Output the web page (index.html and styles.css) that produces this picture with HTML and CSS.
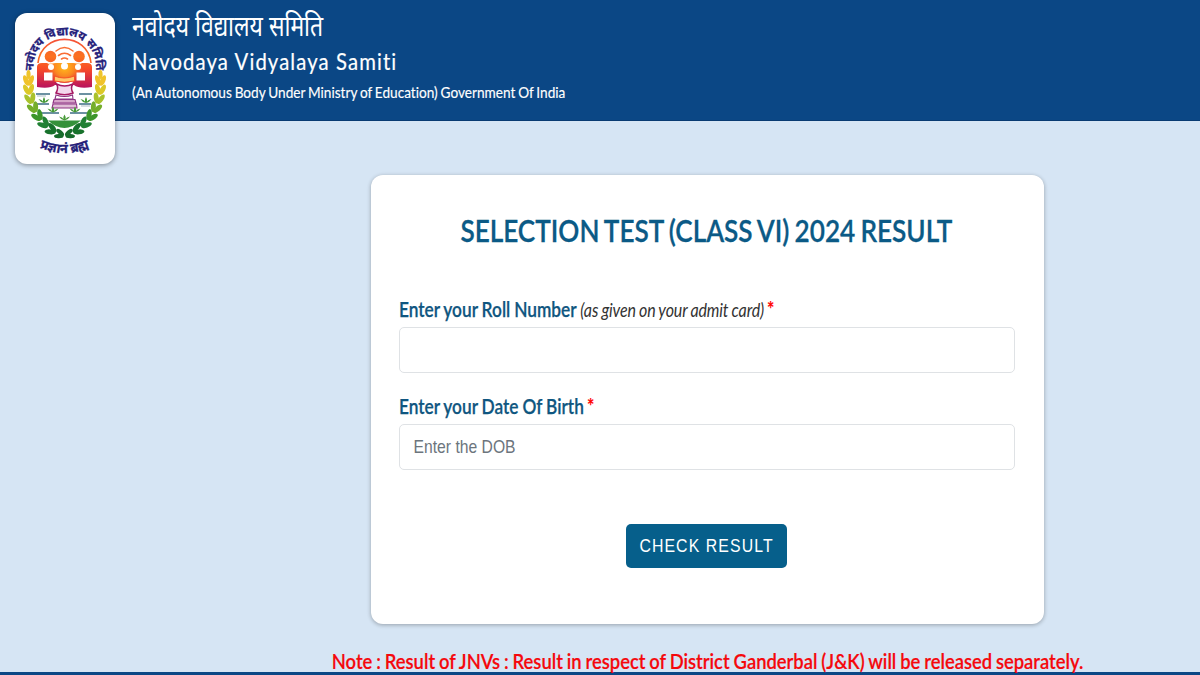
FILE: index.html
```html
<!DOCTYPE html>
<html lang="en">
<head>
<meta charset="utf-8">
<title>Navodaya Vidyalaya Samiti</title>
<link rel="stylesheet" href="styles.css">
</head>
<body>
<header class="header">
  <div class="logo">
    <svg viewBox="15 12 100 151" width="100" height="151" aria-label="Navodaya Vidyalaya Samiti emblem">
      <defs>
        <linearGradient id="people" gradientUnits="userSpaceOnUse" x1="0" y1="38" x2="0" y2="88">
          <stop offset="0" stop-color="#f4503a"/><stop offset=".35" stop-color="#fb7220"/><stop offset=".6" stop-color="#f84b28"/><stop offset="1" stop-color="#b40f62"/>
        </linearGradient>
        <radialGradient id="glow" gradientUnits="userSpaceOnUse" cx="64.5" cy="66" r="19">
          <stop offset="0" stop-color="#ffc01c"/><stop offset=".5" stop-color="#ff9b1d" stop-opacity=".8"/><stop offset="1" stop-color="#ff7a1d" stop-opacity="0"/>
        </radialGradient>
        <g id="leaf">
          <ellipse cx="-2.400" cy="-2.500" rx="2.500" ry="5.600" transform="rotate(-22 -2.400 -2.500)"/>
          <ellipse cx="2.400" cy="-2.500" rx="2.500" ry="5.600" transform="rotate(22 2.400 -2.500)"/>
        </g>
        <g id="wreath">
          <ellipse cx="28.500" cy="73.500" rx="2.100" ry="4.500" fill="#eec42c"/>
          <use href="#leaf" transform="translate(28.500 82)" fill="#f0c22a"/>
          <use href="#leaf" transform="translate(29 91) rotate(-5)" fill="#dcc827"/>
          <use href="#leaf" transform="translate(31 100) rotate(-14)" fill="#a9c22c"/>
          <use href="#leaf" transform="translate(34.500 109) rotate(-25)" fill="#74ae2b"/>
          <use href="#leaf" transform="translate(39.500 117) rotate(-36)" fill="#3d962b"/>
          <use href="#leaf" transform="translate(46 124) rotate(-49)" fill="#208034"/>
          <use href="#leaf" transform="translate(53.500 130) rotate(-61)" fill="#18722c"/>
          <use href="#leaf" transform="translate(61.500 134) rotate(-70) scale(.85)" fill="#176b2b"/>
        </g>
        <g id="plant"><path d="M0 0Q-4-1-5.500-4Q-2-3.500-1-1.500Q-1.500-4 0-6Q1.500-4 1-1.500Q2-3.500 5.500-4Q4-1 0 0Z" fill="#489a39"/></g>
        <path id="arcTop" d="M33 70L33.500 65C36 24 93 24 96 65L96.500 70"/>
        <path id="arcBottom" d="M39 146.500Q64.500 157.500 90 146.500"/>
      </defs>
      <text class="emblem-text emblem-top"><textPath href="#arcTop" startOffset="50%">नवोदय विद्यालय समिति</textPath></text>
      <path d="M38 62C41 30.500 88 30.500 91 62" fill="none" stroke="url(#people)" stroke-width="1.600"/>
      <g fill="none" stroke="#f96d35" stroke-width="1.600" stroke-linecap="round">
        <path d="M56 50Q64.500 43 73 50"/><path d="M58.500 54.500Q64.500 50 70.500 54.500"/><path d="M61.500 58Q64.500 56 67.500 58"/>
      </g>
      <g fill="url(#people)">
        <circle cx="50.500" cy="55.500" r="5.800"/><circle cx="79" cy="55.500" r="5.800"/>
        <path d="M37 86V66Q37 62 42 62H47L50 64L56 62H73L79 64L82 62H87Q92 62 92 66V86Q79 88 74 84H55Q50 88 37 86Z"/>
      </g>
      <rect x="43" y="62" width="43" height="19" fill="url(#glow)"/>
      <g fill="#fff">
        <circle cx="51" cy="66" r="3"/><circle cx="64.500" cy="65" r="3.500"/><circle cx="78" cy="66" r="3"/>
        <path d="M44 71.500H52.500V79.500H44ZM76.500 71.500H85V79.500H76.500Z"/>
        <path d="M56 80Q64.500 84 73 80L71 88H58Z"/>
      </g>
      <path d="M54.500 75Q64 79 74.500 75V80Q64.500 82.500 54.500 80Z" fill="#ffc76a" stroke="#f75223" stroke-width="1"/>
      <path d="M56 92Q59 87 56.500 83Q64.500 87 73 83Q70 87 73 92Q64.500 95.500 56 92Z" fill="#f3d7ec" stroke="#a71861" stroke-width="1.500"/>
      <g stroke="#8e3383" stroke-width="1.100">
        <path d="M56 94Q64.500 97 72.500 94L73 98H55Z" fill="#fff"/>
        <path d="M54 98.500H75L76 102H53Z" fill="#d6a5c9"/>
        <path d="M53 103H76.500L77 107H52Z" fill="#e0bfd7"/>
      </g>
      <path d="M36 93H50M79 93H92M37 103H49M79 103H91M41 112H59M70 112H87" stroke="#3d6e84" stroke-width="1.300"/>
      <path d="M37 95H46M81 105H90" stroke="#8a9dac" stroke-width=".7"/>
      <use href="#plant" x="44" y="102"/><use href="#plant" x="86" y="102"/><use href="#plant" x="53" y="111.500"/><use href="#plant" x="75" y="111.500"/>
      <use href="#wreath"/><use href="#wreath" transform="translate(129 0) scale(-1 1)"/>
      <path d="M48 119.500H81Q72 127 64.500 127Q56 127 48 119.500Z" fill="#35913a"/>
      <use href="#plant" x="64.500" y="119.500"/>
      <text class="emblem-text emblem-bottom"><textPath href="#arcBottom" startOffset="50%">प्रज्ञानं ब्रह्म</textPath></text>
    </svg>
  </div>
  <div class="brand">
    <div class="brand-hindi squeeze">नवोदय विद्यालय समिति</div>
    <div class="brand-english squeeze">Navodaya Vidyalaya Samiti</div>
    <div class="brand-sub squeeze">(An Autonomous Body Under Ministry of Education) Government Of India</div>
  </div>
</header>
<main class="main">
  <form class="card">
    <h1 class="title">SELECTION TEST (CLASS VI) 2024 RESULT</h1>
    <label class="label squeeze" for="roll">Enter your Roll Number <em class="hint">(as given on your admit card)</em> <span class="required">*</span></label>
    <div class="field"><input class="input squeeze" id="roll" type="text"></div>
    <label class="label squeeze" for="dob">Enter your Date Of Birth <span class="required">*</span></label>
    <div class="field"><input class="input squeeze" id="dob" type="text" placeholder="Enter the DOB"></div>
    <button class="button" type="button"><span class="button-text">CHECK RESULT</span></button>
  </form>
  <p class="note">Note : Result of JNVs : Result in respect of District Ganderbal (J&amp;K) will be released separately.</p>
</main>
<footer class="footer"></footer>
</body>
</html>
```
FILE: styles.css
```css
* { box-sizing: border-box; }
body {
  margin: 0;
  height: 675px;
  overflow: hidden;
  display: flex;
  flex-direction: column;
  background: #d6e5f4;
  font-family: Lato, "Noto Sans", sans-serif;
  font-variant-ligatures: no-common-ligatures;
}
.header {
  flex: none;
  display: flex;
  height: 120.500px;
  padding: 12.500px 0 0 15px;
  background: #0b4785;
  border-bottom: 1px solid #083b72;
}
.logo {
  position: relative;
  z-index: 1;
  flex: none;
  width: 100px;
  height: 151px;
  overflow: hidden;
  background: #fff;
  border-radius: 12px;
  box-shadow: 0 1px 5px rgba(0, 0, 0, .4);
}
.logo svg { display: block; }
.emblem-text {
  font-family: "Noto Sans Devanagari", "Noto Sans", sans-serif;
  font-weight: 700;
  fill: #25217a;
  stroke: #25217a;
  stroke-width: .3px;
  text-anchor: middle;
}
.emblem-top { font-size: 11.700px; }
.emblem-bottom { font-size: 13px; }

/* Narrow lettering used throughout the page */
.squeeze { transform-origin: 0 50%; white-space: nowrap; }

.brand { margin-left: 17px; color: #fff; }
.brand-hindi {
  height: 30px;
  font: 400 28px/32px "Noto Sans Devanagari", "Noto Sans", sans-serif;
  transform: scaleX(.82);
}
.brand-english {
  height: 37px;
  font-size: 24px;
  line-height: 36px;
  letter-spacing: 1.300px;
  transform: scaleX(.845);
  -webkit-text-stroke: .2px #fff;
}
.brand-sub {
  font-size: 16px;
  line-height: 23px;
  word-spacing: -.8px;
  transform: scaleX(.852);
  -webkit-text-stroke: .15px #fff;
}
.main {
  flex: 1;
  display: flex;
  flex-direction: column;
  padding: 54.500px 0 0 370.500px;
}
.card {
  display: flex;
  flex-direction: column;
  width: 673px;
  height: 449px;
  padding: 36.500px 29px 0 28px;
  background: #fff;
  border-radius: 12px;
  box-shadow: 0 1px 4px rgba(0, 0, 0, .3);
}
.title {
  align-self: center;
  margin: 0 0 53px;
  font-size: 31.500px;
  font-weight: 600;
  line-height: 36px;
  word-spacing: -1.600px;
  color: #0b5a86;
  white-space: nowrap;
  transform: scaleX(.830);
  -webkit-text-stroke: .3px #0b5a86;
}
.label {
  height: 18px;
  font-size: 20.500px;
  font-weight: 600;
  line-height: 17px;
  word-spacing: -.4px;
  color: #0f5680;
  transform: scaleX(.843);
  -webkit-text-stroke: .25px currentColor;
}
.hint { font-size: 19px; font-weight: 400; color: #333; letter-spacing: -.18px; -webkit-text-stroke: 0; }
.required { font-weight: 600; color: #f00; margin-left: -1px; }
.field {
  height: 46px;
  margin: 8px 0 25px;
  border: 1px solid #dfe2e5;
  border-radius: 5px;
}
.input {
  display: block;
  width: 700px;
  height: 45px;
  padding: 0 0 0 16px;
  border: 0;
  outline: 0;
  background: transparent;
  font: 18.500px "Liberation Sans", sans-serif;
  transform: scaleX(.848);
}
.input::placeholder { color: #6c757d; opacity: 1; }
.button {
  align-self: center;
  display: flex;
  align-items: center;
  justify-content: center;
  width: 161px;
  height: 44px;
  margin-top: 29px;
  padding: 0;
  border: 0;
  border-radius: 5px;
  background: #065f8b;
  color: #fff;
}
.button-text {
  font: 18.500px "Liberation Sans", sans-serif;
  letter-spacing: 1.300px;
  white-space: nowrap;
  transform: scaleX(.855);
}
.note {
  align-self: flex-start;
  width: 673px;
  display: flex;
  justify-content: center;
  margin: 23px 0 -10px;
  font-size: 21.500px;
  font-weight: 600;
  line-height: 28px;
  word-spacing: -.8px;
  color: #f5080c;
  white-space: nowrap;
  transform: scaleX(.855);
  -webkit-text-stroke: .2px #f5080c;
}
.footer { flex: none; height: 3px; background: #0b4785; }
```
